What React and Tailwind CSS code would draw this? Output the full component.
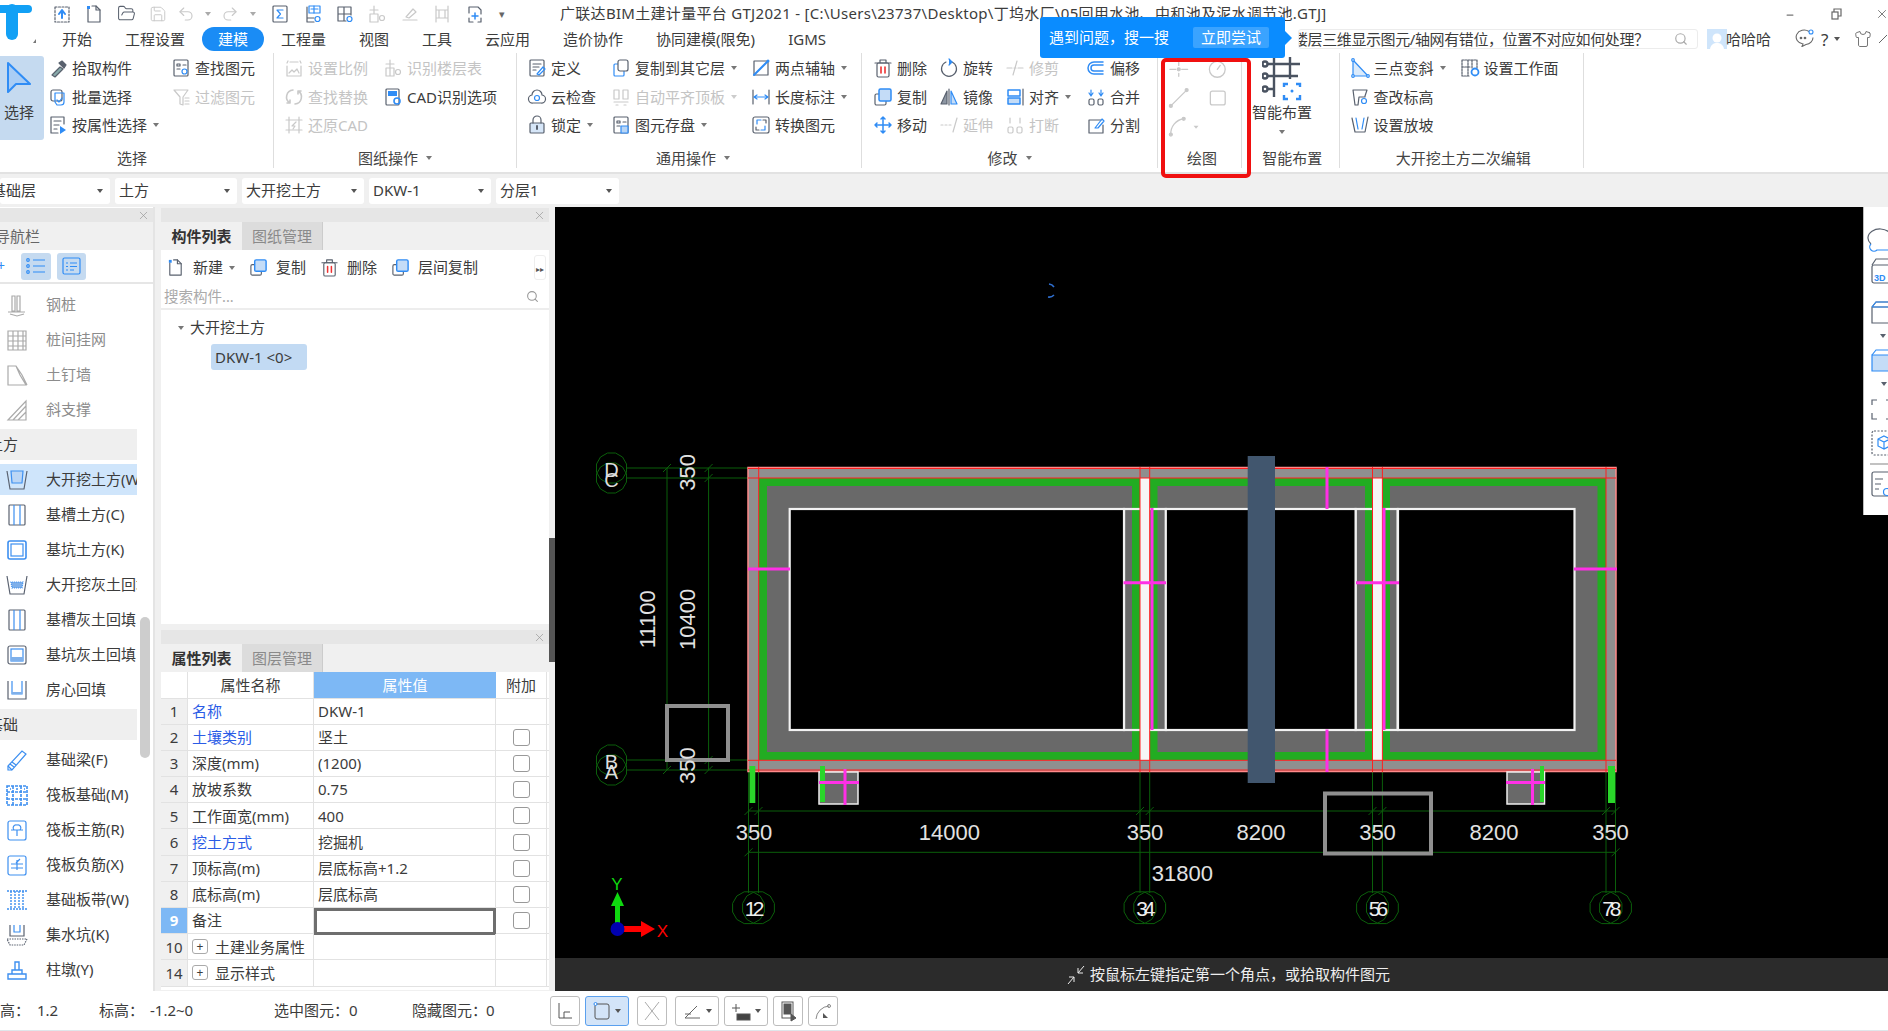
import React from 'react'
import { FolderOpen, Save, Undo2, Redo2, Search, X, Shirt, Minus } from 'lucide-react'

const D = '#59616e'
const B = '#2f8cf5'
const L = '#c4dcf7'
const G = '#c9c9c9'

function Svg({ children, s = 20 }) {
  return (
    <svg width={s} height={s} viewBox="0 0 20 20" fill="none" stroke={D} strokeWidth="1.2" strokeLinecap="round" strokeLinejoin="round" className="shrink-0">
      {children}
    </svg>
  )
}

const ic = {
  upload: <><rect x="3" y="3" width="14" height="15" strokeDasharray="2 1.5" /><path d="M10 14V7M7 10l3-4 3 4" stroke={B} strokeWidth="2" /></>,
  newdoc: <><path d="M4 5v13h12V6l-4-4H8" /><path d="M12 2v4h4" /><path d="M3 2h3v3H3z" fill={B} stroke="none" /></>,
  sigma: <><rect x="3" y="2" width="14" height="16" rx="1" /><path d="M13 6H7l3.5 4L7 14h6" stroke={B} /></>,
  sheetq: <><path d="M4 3v15h7M4 14h7" /><rect x="6" y="2" width="11" height="7" stroke={B} /><path d="M8 5h7M11 2v7" stroke={B} /><circle cx="14.5" cy="15" r="2.5" stroke={B} /></>,
  gridq: <><path d="M3 3h13v8M3 3v14h8M3 10h13M9 3v14" /><circle cx="14.5" cy="15" r="2.5" stroke={B} /></>,
  gridoff: <><path d="M7 2v8M3 6h8M3 10h8v8H3z" stroke={G} /><circle cx="15" cy="14" r="2.5" stroke={G} /></>,
  pen: <path d="M3 16h14M6 13l7-8 3 3-7 6z" stroke={G} />,
  dims: <path d="M4 2v16M16 2v16M4 6h12M4 14h12M7 6v8M13 6v8" stroke={G} />,
  cornerplus: <><path d="M5 9V3h9l3 3v4M9 18H5v-4M17 14v4h-3" /><path d="M11 9v6M8 12h6" stroke={B} strokeWidth="1.5" /></>,
  pick: <><path d="M4 17l8-8 3 2-8 8z" fill="#8aa" /><path d="M11 5l5 5 2-3-4-4z" fill={D} /></>,
  batch: <><rect x="3" y="3" width="11" height="11" rx="2" /><path d="M7 6h9v9a3 3 0 0 1-3 3H9l-2-3z" stroke={B} /><path d="M9 13l2 2 3-4" stroke={B} /></>,
  attr: <><path d="M16 9V2H3v16h7" /><path d="M6 6h7M6 10h5M6 14h3" /><path d="M12 11l6 4-6 4z" fill={B} stroke="none" /></>,
  find: <><rect x="3" y="2" width="14" height="16" rx="1" /><path d="M6 6h3v2H6zM12 7h3M6 11h3" /><circle cx="13.5" cy="13.5" r="2.5" stroke={B} /></>,
  filter: <path d="M3 3h14l-5 7v8l-3-1v-7zM14 11h4M14 14h4M14 17h4" stroke={G} />,
  scale: <><path d="M3 8v10h14V8M6 4h8M3 5l1-2M17 5l-1-2" stroke={G} /><path d="M5 15l3-3 2 2 3-3 2 4" stroke={G} /></>,
  floor: <><path d="M7 2v8M3 6h8M3 10h8v8H3zM7 10v8" stroke={G} /><circle cx="15" cy="14" r="2.5" stroke={G} /></>,
  swap: <path d="M9 3a7 7 0 0 0-3 13M11 17a7 7 0 0 0 3-13M6 13v3H3M14 7V4h3" stroke={G} strokeWidth="1.6" />,
  restore: <><path d="M2 5h16M2 15h16M5 2v16M15 2v16" stroke={G} /><path d="M12 7l-4 4h3l-2 3" stroke={G} /></>,
  cad: <><rect x="3" y="2" width="13" height="16" rx="1" /><rect x="5" y="4" width="9" height="5" fill={B} stroke="none" /><circle cx="14" cy="14" r="3" stroke={B} strokeWidth="1.6" /></>,
  define: <><rect x="3" y="2" width="14" height="16" rx="1" /><path d="M6 6h8M6 9h6M6 12h3" /><path d="M10 16l6-7 2 2-6 6z" stroke={B} /></>,
  cloud: <><path d="M6 16a4 4 0 0 1-1-8 5 5 0 0 1 10 0 4 4 0 0 1-1 8z" /><circle cx="10" cy="11" r="2.5" stroke={B} /></>,
  lock: <><rect x="3" y="8" width="14" height="10" rx="1" fill="#d6e6f8" /><path d="M6 8V5a4 4 0 0 1 8 0v3" /><path d="M10 11v3" stroke={D} strokeWidth="2" /></>,
  copyto: <><rect x="3" y="6" width="10" height="12" rx="1" stroke={B} /><rect x="7" y="2" width="10" height="11" rx="2" fill="#fff" /></>,
  autoalign: <path d="M3 3h5v9H3zM12 3h5v9h-5zM3 15h14M5 18h2M13 18h2" stroke={G} />,
  store: <><rect x="3" y="2" width="14" height="16" rx="1" /><path d="M6 6h3v2H6zM12 7h3M6 11h3" /><rect x="10" y="11" width="7" height="7" fill="#b8d5f5" stroke={B} /></>,
  axis: <><path d="M3 3h14v14H3z" /><path d="M3 17L17 3" stroke={B} strokeWidth="2" /><circle cx="17" cy="3" r="1.5" fill={B} stroke="none" /></>,
  length: <><path d="M2 3v14M18 3v14" /><path d="M3 10h14M6 8l-3 2 3 2M14 8l3 2-3 2" stroke={B} /></>,
  convert: <><rect x="2" y="2" width="16" height="16" rx="2" /><path d="M6 9V5h4M14 11v4h-4" stroke={B} /><path d="M12 5h3v3M5 12v3h3" /></>,
  del: <><rect x="4" y="5" width="12" height="14" rx="1.5" /><path d="M2 5h16M7 5V2h6v3" /><path d="M8 9v6M12 9v6" stroke="#e33" strokeWidth="1.6" /></>,
  rotate: <><path d="M7 4a7.5 7.5 0 1 0 6 0" /><path d="M10 1l3 3-3 3" stroke={B} fill={B} /></>,
  trim: <path d="M2 10h5M9 10h2M13 10h5M12 3L8 17" stroke={G} />,
  offset: <path d="M17 4H8a6 6 0 0 0 0 12h9M17 7H8a3 3 0 0 0 0 6h9" stroke={B} strokeWidth="1.5" />,
  copy: <><rect x="2" y="7" width="11" height="11" rx="1.5" /><rect x="6" y="2" width="12" height="12" rx="1.5" fill={L} stroke={B} strokeWidth="1.5" /></>,
  mirror: <><path d="M10 2v16" /><path d="M8 4L2 17h6z" fill="#8d96a3" /><path d="M12 4l6 13h-6z" fill={L} stroke={B} /></>,
  align: <><rect x="3" y="3" width="12" height="6" stroke={B} strokeWidth="1.5" /><rect x="3" y="11" width="12" height="6" fill={L} stroke={B} strokeWidth="1.5" /><path d="M18 2v16" /></>,
  merge: <><rect x="3" y="12" width="5" height="6" rx="1.5" /><rect x="12" y="12" width="5" height="6" rx="1.5" /><path d="M5 3v5M15 3v5M3 6l2 3 2-3M13 6l2 3 2-3" stroke={B} /></>,
  move: <path d="M10 2v16M2 10h16M8 4l2-2 2 2M8 16l2 2 2-2M4 8l-2 2 2 2M16 8l2 2-2 2" stroke={B} strokeWidth="1.5" />,
  extend: <path d="M2 10h2M6 10h2M10 10h2M18 3l-4 14" stroke={G} />,
  breakit: <><rect x="3" y="12" width="5" height="6" rx="1.5" stroke={G} /><rect x="12" y="12" width="5" height="6" rx="1.5" stroke={G} /><path d="M5 3v5M15 3v5" stroke={G} /></>,
  split: <><path d="M15 5H3v13h14v-8" /><path d="M9 13l7-9 2 2-6 7z" stroke={B} /></>,
  threept: <><path d="M3 2v16h15z" fill="#dcebfb" stroke={B} /><circle cx="3" cy="2" r="1.3" fill="#fff" stroke={B} /><circle cx="3" cy="18" r="1.3" fill="#fff" stroke={B} /><circle cx="18" cy="18" r="1.3" fill="#fff" stroke={B} /></>,
  workplane: <><path d="M2 2h15v8M2 2v16h8M2 9h8M8 2v16M12 2v8" strokeDasharray="2 1" /><circle cx="15" cy="14" r="3.5" stroke={B} strokeWidth="1.8" /></>,
  elev: <><path d="M3 3h14l-2 6v1H9l-1 8H5z" /><circle cx="14" cy="14" r="2.5" stroke={B} /></>,
  slope: <><path d="M2 3l3 14h10l3-15" /><path d="M6 3l2 11M14 3l-2 11" stroke={B} /></>,
}

const I = ({ n, s }) => <Svg s={s}>{ic[n]}</Svg>

function Caret({ c = '#777', cls = '' }) {
  return <span className={`inline-block w-0 h-0 border-x-[3px] border-x-transparent border-t-[4px] ${cls}`} style={{ borderTopColor: c }} />
}

function Item({ n, t, off, caret }) {
  return (
    <div className="flex items-center h-[28.5px] whitespace-nowrap">
      <I n={n} />
      {t && <span className={`ml-[4px] ${off ? 'text-[#c4c4c4]' : 'text-[#3c3c3c]'}`}>{t}</span>}
      {caret && <Caret c={off ? '#ccc' : '#777'} cls="ml-[6px]" />}
    </div>
  )
}

function Group({ w, label, caret, children }) {
  return (
    <div className="flex flex-col h-[115px] pt-[1px] border-r border-[#dedede] shrink-0" style={{ width: w }}>
      <div className="flex h-[85.5px]">{children}</div>
      <div className="mt-[8.5px] h-[20px] leading-[20px] flex items-center justify-center text-[#444]">
        {label}
        {caret && <Caret cls="ml-[8px]" />}
      </div>
    </div>
  )
}

function Col({ w, children }) {
  return <div className="flex flex-col shrink-0" style={{ width: w }}>{children}</div>
}

function Ribbon() {
  return (
    <div className="flex h-[123px] pt-[2px] bg-white text-[15px] border-b-2 border-[#e2e2e2] relative">
      <Group w={274} label={<span className="-ml-[9px]">选择</span>}>
        <div className="w-[44px] h-[84px] mt-[2px] bg-[#c5daf0] rounded-r-[3px] flex flex-col items-center shrink-0 text-[#3c3c3c]">
          <svg width="26" height="32" viewBox="0 0 26 32" className="mt-[5px] -ml-[7px]">
            <path d="M2 2L24 23L10 23L2 31Z" fill="#a9cdf5" stroke={B} strokeWidth="2" strokeLinejoin="round" />
          </svg>
          <span className="mt-[8px] -ml-[6px]">选择</span>
        </div>
        <Col w={127}>
          <div className="ml-[4px]">
            <Item n="pick" t="拾取构件" />
            <Item n="batch" t="批量选择" />
            <Item n="attr" t="按属性选择" caret />
          </div>
        </Col>
        <Col w={100}>
          <Item n="find" t="查找图元" />
          <Item n="filter" t="过滤图元" off />
        </Col>
      </Group>
      <Group w={243} label="图纸操作" caret>
        <Col w={109}>
          <div className="ml-[10px]">
            <Item n="scale" t="设置比例" off />
            <Item n="swap" t="查找替换" off />
            <Item n="restore" t="还原CAD" off />
          </div>
        </Col>
        <Col w={130}>
          <Item n="floor" t="识别楼层表" off />
          <Item n="cad" t="CAD识别选项" />
        </Col>
      </Group>
      <Group w={345} label={<span className="ml-[8px]">通用操作</span>} caret>
        <Col w={94}>
          <div className="ml-[10px]">
            <Item n="define" t="定义" />
            <Item n="cloud" t="云检查" />
            <Item n="lock" t="锁定" caret />
          </div>
        </Col>
        <Col w={140}>
          <Item n="copyto" t="复制到其它层" caret />
          <Item n="autoalign" t="自动平齐顶板" off caret />
          <Item n="store" t="图元存盘" caret />
        </Col>
        <Col w={105}>
          <Item n="axis" t="两点辅轴" caret />
          <Item n="length" t="长度标注" caret />
          <Item n="convert" t="转换图元" />
        </Col>
      </Group>
      <Group w={296} label="修改" caret>
        <Col w={77}>
          <div className="ml-[11px]">
            <Item n="del" t="删除" />
            <Item n="copy" t="复制" />
            <Item n="move" t="移动" />
          </div>
        </Col>
        <Col w={66}>
          <Item n="rotate" t="旋转" />
          <Item n="mirror" t="镜像" />
          <Item n="extend" t="延伸" off />
        </Col>
        <Col w={81}>
          <Item n="trim" t="修剪" off />
          <Item n="align" t="对齐" caret />
          <Item n="breakit" t="打断" off />
        </Col>
        <Col w={66}>
          <Item n="offset" t="偏移" />
          <Item n="merge" t="合并" />
          <Item n="split" t="分割" />
        </Col>
      </Group>
      <Group w={84} label={<span className="ml-[5px]">绘图</span>}>
        <svg width="84" height="85" viewBox="0 0 84 85" fill="none" stroke={G} strokeWidth="1.3" strokeLinecap="round" className="mt-[2px]">
          <path d="M12 13h6M24 13h6M21 6v3M21 17v3" />
          <circle cx="21" cy="13" r="1.5" fill={G} />
          <circle cx="60" cy="13" r="8" />
          <path d="M60 13l3-4" />
          <path d="M13 50l16-16" />
          <circle cx="13" cy="50" r="1.5" fill={G} />
          <circle cx="29" cy="34" r="1.5" fill={G} />
          <rect x="53" y="35" width="15" height="14" rx="2" />
          <path d="M13 79a15 15 0 0 1 13-16" />
          <circle cx="13" cy="79" r="1.5" fill={G} />
          <circle cx="26" cy="63" r="1.5" fill={G} />
          <path d="M36 70l5 0-2.5 3z" fill={G} stroke="none" />
        </svg>
      </Group>
      <Group w={97.5} label={<span className="ml-[4px]">智能布置</span>}>
        <div className="flex flex-col items-center w-[80px] mt-[3px]">
          <svg width="40" height="44" viewBox="0 0 40 44" fill="none" stroke="#4a5361" strokeWidth="2.4">
            <path d="M5 7H38M5 19H36M5 32H12M12 0V40M28 0V22" />
            <circle cx="3" cy="7" r="2.5" fill="#fff" />
            <circle cx="3" cy="19" r="2.5" fill="#fff" />
            <circle cx="3" cy="32" r="2.5" fill="#fff" />
            <path d="M22 30v-3h4M34 27h4v3M38 38v4h-4M26 42h-4v-4" stroke={B} />
            <circle cx="30" cy="34" r="1.5" fill={B} stroke="none" />
          </svg>
          <span className="leading-[18px] mt-[2px] text-[#3c3c3c] whitespace-nowrap">智能布置</span>
          <Caret cls="mt-[9px]" />
        </div>
      </Group>
      <Group w={244.5} label={<span className="ml-[4px]">大开挖土方二次编辑</span>}>
        <Col w={120}>
          <div className="ml-[10px]">
            <Item n="threept" t="三点变斜" caret />
            <Item n="elev" t="查改标高" />
            <Item n="slope" t="设置放坡" />
          </div>
        </Col>
        <Col w={110}>
          <Item n="workplane" t="设置工作面" />
        </Col>
      </Group>
      {/* 截图里手动圈出来的红框 */}
      <div className="absolute left-[1161px] top-[7px] w-[90px] h-[120px] border-[4px] border-[#f01010] rounded-[5px]" />
    </div>
  )
}

function TitleRow() {
  const quick = [
    [32, <I n="upload" />],
    [32, <I n="newdoc" />],
    [32, <FolderOpen size={19} color={D} strokeWidth={1.3} />],
    [32, <Save size={18} color={G} strokeWidth={1.3} />],
    [24, <Undo2 size={18} color={G} strokeWidth={1.5} />],
    [20, <Caret c="#aaa" />],
    [24, <Redo2 size={18} color={G} strokeWidth={1.5} />],
    [22, <Caret c="#aaa" />],
    [32, <I n="sigma" />],
    [33, <I n="sheetq" />],
    [32, <I n="gridq" />],
    [32, <I n="gridoff" />],
    [33, <I n="pen" />],
    [32, <I n="dims" />],
    [32, <I n="cornerplus" />],
    [24, <span className="text-[#666] text-[11px] leading-none">▾</span>],
  ]
  return (
    <div className="flex items-center h-[27px] pl-[46px] bg-white text-[15px] text-[#3c3c3c]">
      <div className="flex items-center w-[514px] shrink-0">
        {quick.map(([w, el], i) => (
          <span key={i} className="flex items-center justify-center shrink-0" style={{ width: w }}>{el}</span>
        ))}
      </div>
      <span className="whitespace-nowrap tracking-[0.3px]">广联达BIM土建计量平台 GTJ2021 - [C:\Users\23737\Desktop\丁坞水厂\05回用水池、中和池及泥水调节池.GTJ]</span>
      <div className="ml-auto flex items-center text-[#555]">
        <Minus size={10} strokeWidth={3} className="mr-[36px] mt-[3px]" color="#777" />
        <svg width="11" height="12" viewBox="0 0 11 12" fill="none" stroke="#666" strokeWidth="1.2" className="mr-[33px]">
          <rect x="1" y="4" width="6" height="7" />
          <path d="M3 4V1h7v7H7" />
        </svg>
        <X size={14} strokeWidth={1.3} color="#555" className="mr-[-1px]" />
      </div>
    </div>
  )
}

function TabRow() {
  const before = ['开始', '工程设置']
  const after = ['工程量', '视图', '工具', '云应用', '造价协作', '协同建模(限免)', 'IGMS']
  return (
    <div className="flex items-center h-[24px] bg-white text-[15px] text-[#3c3c3c]">
      <div className="flex items-center gap-[33px] w-[1298px] pl-[62px] shrink-0 whitespace-nowrap">
        {before.map((t) => <span key={t}>{t}</span>)}
        <span className="-mx-[16px] w-[62px] h-[24px] leading-[24px] text-center rounded-full bg-[#1a8cf5] text-white">建模</span>
        {after.map((t) => <span key={t}>{t}</span>)}
      </div>
      <div className="w-[400px] h-[20px] border border-[#ececec] rounded-[3px] flex items-center overflow-hidden shrink-0">
        <span className="whitespace-nowrap text-[15px] -ml-[6px] tracking-[-0.4px] mr-auto">{'楼层三维显示图元/轴网有错位\uFF0C位置不对应如何处理\uFF1F'}</span>
        <Search size={14} color="#aaa" className="mr-[9px] shrink-0" />
      </div>
      <div className="w-[20px] h-[20px] bg-[#cfe5fb] ml-[9px] flex items-end justify-center overflow-hidden shrink-0">
        <svg width="16" height="18" viewBox="0 0 16 18"><circle cx="8" cy="7" r="4.5" fill="#fff" /><path d="M1 18c1-5 4-6 7-6s6 1 7 6z" fill="#fff" /></svg>
      </div>
      <span className="-ml-[1px] w-[48px] whitespace-nowrap">哈哈哈</span>
      <svg width="20" height="18" viewBox="0 0 20 18" fill="none" stroke="#666" strokeWidth="1.1" className="ml-[21px] -mt-[3px] shrink-0">
        <path d="M14 2.5a8 7 0 1 0-6 12.5l-1 2.5 4-2a8 7 0 0 0 7-7" />
        <circle cx="6" cy="9" r=".8" fill="#666" />
        <circle cx="10" cy="9" r=".8" fill="#666" />
        <circle cx="16" cy="3" r="2" stroke={B} />
      </svg>
      <span className="ml-[6px] w-[12px] text-[17px] leading-none">?</span>
      <Caret c="#555" cls="ml-[1px] mr-[14px]" />
      <Shirt size={18} color="#666" strokeWidth={1.2} className="shrink-0" />
      <svg width="8" height="10" viewBox="0 0 8 10" stroke="#666" className="ml-[7px] shrink-0"><path d="M0 9L8 1" /></svg>
    </div>
  )
}

function Combo({ w, t, cls = '' }) {
  return (
    <div className="flex items-center justify-between h-[26px] bg-white rounded-[3px] pl-[4px] pr-[7px] shrink-0 overflow-hidden" style={{ width: w }}>
      <span className={`whitespace-nowrap ${cls}`}>{t}</span>
      <Caret c="#555" />
    </div>
  )
}

function ComboRow() {
  return (
    <div className="flex items-center gap-[5px] h-[33px] bg-[#f0f0f0] text-[15px] text-[#3c3c3c]">
      <Combo w={110} t="基础层" cls="-ml-[13px]" />
      <Combo w={122} t="土方" />
      <Combo w={122} t="大开挖土方" />
      <Combo w={122} t="DKW-1" />
      <Combo w={123} t="分层1" />
    </div>
  )
}

const N = '#5a6270'
const BB = '#3d8ff0'
const navIcons = {
  pile: <path d="M7 3h3v15H7zM12 3h3v15h-3zM3 19h17M5 21l7 2 7-2" stroke="#aaa" />,
  mesh: <path d="M3 3h18v19H3zM3 8h18M3 13h18M3 18h18M8 3v19M13 3v19M18 3v19" stroke="#aaa" />,
  nail: <path d="M3 3h8l4 9 6 10H3zM11 3l6 9 5 10" stroke="#aaa" />,
  brace: <path d="M3 22h18V3zM8 22L21 8M21 14l-8 8" stroke="#aaa" />,
  dakai: <><path d="M2 3l3 18h14l3-18" stroke={N} /><path d="M6 3l1 12h10l1-12z" fill="#bcd6f5" stroke={BB} /></>,
  jicao: <><rect x="4" y="2" width="16" height="20" rx="1" stroke={N} /><path d="M9 2v20M15 2v20" stroke={BB} /></>,
  jikeng: <><rect x="3" y="3" width="18" height="18" rx="2" stroke={BB} strokeWidth="1.6" /><rect x="6" y="6" width="12" height="12" stroke={BB} /></>,
  hui: <><path d="M2 3l3 18h14l3-18" stroke={N} /><path d="M6 9l1 6h10l1-6z" fill="#7fb0ea" stroke={BB} strokeDasharray="1 1" /></>,
  huicao: <><rect x="4" y="2" width="16" height="20" rx="1" stroke={N} /><path d="M9 2v20M15 2v20" stroke={BB} /></>,
  huikeng: <><rect x="3" y="3" width="18" height="18" rx="2" stroke={N} /><rect x="6" y="6" width="12" height="12" stroke={BB} /><path d="M6 14h12v4H6z" fill="#7fb0ea" /></>,
  fang: <><path d="M3 3v18h18V3" stroke={N} /><path d="M7 3v13h10V3" stroke={BB} /><path d="M7 14h10v2H7z" fill="#7fb0ea" /></>,
  liang: <><path d="M3 18L17 3l4 3L7 22H3z" stroke={BB} /><path d="M3 18l4 4M5 16l4 3M7 14l4 3" stroke={BB} /></>,
  fb: <path d="M2 3h20v19H2zM2 9h20M2 16h20M8 3v19M16 3v19M5 6h1M11 6h2M19 6h1" stroke={BB} strokeDasharray="3 1" strokeWidth="1.6" />,
  zhu: <><rect x="3" y="3" width="18" height="19" rx="2" stroke={BB} /><path d="M6 12h12M12 7a3 3 0 0 1 3 5M12 7a3 3 0 0 0-3 5M12 12v6" stroke={BB} /></>,
  fu: <><rect x="3" y="3" width="18" height="19" rx="2" stroke={BB} /><path d="M6 11h12M6 15h12M12 7v10M15 6l-4 4" stroke={BB} /></>,
  dai: <path d="M2 3h20M2 21h20M6 3v18M18 3v18M10 3v18M14 3v18" stroke={BB} strokeDasharray="2 1" strokeWidth="1.4" />,
  ji: <><path d="M5 2v11h14V2" stroke={N} /><path d="M2 16h20l-3 6H5z" stroke={N} strokeDasharray="1.5 1" /><path d="M9 2v7h6V2" stroke={BB} /></>,
  dun: <path d="M3 21h18v-5H3zM7 16v-4h10v4M10 12V4h4v8" stroke={BB} strokeWidth="1.4" />,
}

const navRows = [
  ['pile', '钢桩', 'off'], ['mesh', '桩间挂网', 'off'], ['nail', '土钉墙', 'off'], ['brace', '斜支撑', 'off'],
  ['', '土方', 'head'],
  ['dakai', '大开挖土方(W)', 'sel'], ['jicao', '基槽土方(C)'], ['jikeng', '基坑土方(K)'], ['hui', '大开挖灰土回填'],
  ['huicao', '基槽灰土回填'], ['huikeng', '基坑灰土回填'], ['fang', '房心回填'],
  ['', '基础', 'head'],
  ['liang', '基础梁(F)'], ['fb', '筏板基础(M)'], ['zhu', '筏板主筋(R)'], ['fu', '筏板负筋(X)'],
  ['dai', '基础板带(W)'], ['ji', '集水坑(K)'], ['dun', '柱墩(Y)'],
]

function PanelStrip() {
  return (
    <div className="h-[14px] bg-[#e6e6e6] flex items-center justify-end pr-[3px] shrink-0">
      <X size={13} color="#999" strokeWidth={1.3} />
    </div>
  )
}

function NavRow({ n, t, kind }) {
  const bg = kind === 'head' ? 'bg-[#efefef]' : kind === 'sel' ? 'bg-[#cfe5fb]' : ''
  return (
    <div className="h-[35px] flex items-center">
      <div className={`flex items-center h-[31px] w-[137px] overflow-hidden whitespace-nowrap ${bg}`}>
        {kind === 'head' ? (
          <span className="-ml-[12px] text-[#3c3c3c]">{t}</span>
        ) : (
          <>
            <svg width="24" height="24" viewBox="0 0 24 24" fill="none" strokeWidth="1.2" className="ml-[5px] shrink-0">{navIcons[n]}</svg>
            <span className={`ml-[17px] ${kind === 'off' ? 'text-[#8c8c8c]' : 'text-[#3c3c3c]'}`}>{t}</span>
          </>
        )}
      </div>
    </div>
  )
}

function LeftNav() {
  return (
    <div className="w-[155px] shrink-0 flex flex-col pt-[1px] bg-white border-r-2 border-[#e4e4e4] text-[15px] relative h-[784px] overflow-hidden">
      <PanelStrip />
      <div className="h-[28px] bg-[#f0f0f0] leading-[28px] text-[#666] -indent-[5px]">导航栏</div>
      <div className="h-[34px] flex items-center border-b-2 border-[#e6e6e6] shrink-0">
        <span className="text-[#2f8cf5] text-[14px] -ml-[3px] w-[24px] leading-none">+</span>
        <span className="w-[30px] h-[27px] rounded-[3px] bg-[#c5daf0] flex items-center justify-center">
          <svg width="20" height="16" viewBox="0 0 20 16" fill="none" stroke={B} strokeWidth="1.2"><path d="M7 2h12M7 8h12M7 14h12" /><circle cx="2" cy="2" r="1.3" /><circle cx="2" cy="8" r="1.3" /><circle cx="2" cy="14" r="1.3" /></svg>
        </span>
        <span className="ml-[6px] w-[29px] h-[27px] rounded-[3px] bg-[#c5daf0] flex items-center justify-center">
          <svg width="19" height="18" viewBox="0 0 19 18" fill="none" stroke={B} strokeWidth="1.2"><rect x="1" y="1" width="17" height="16" rx="1.5" /><path d="M4 6h2M8 6h7M4 9.5h2M8 9.5h7M4 13h2M8 13h4" /></svg>
        </span>
      </div>
      <div className="pt-[3px]">
        {navRows.map(([n, t, k]) => <NavRow key={t} n={n} t={t} kind={k} />)}
      </div>
      <div className="absolute left-[140px] top-[410px] w-[10px] h-[141px] rounded-full bg-[#cdcdcd]" />
    </div>
  )
}

function Tabs({ a, b }) {
  return (
    <div className="flex h-[28px] bg-[#f0f0f0] shrink-0">
      <div className="w-[81px] flex items-center justify-center font-semibold text-[#333]">{a}</div>
      <div className="w-[81px] flex items-center justify-center bg-[#dcdcdc] text-[#8a8a8a] border-r border-[#ccc]">{b}</div>
    </div>
  )
}

function ToolBtn({ children, t, cls }) {
  return (
    <div className={`flex items-center whitespace-nowrap ${cls}`}>
      {children}
      <span className="ml-[8px]">{t}</span>
    </div>
  )
}

function ComponentPanel() {
  return (
    <div className="h-[416px] flex flex-col bg-white shrink-0">
      <PanelStrip />
      <Tabs a="构件列表" b="图纸管理" />
      <div className="h-[35px] flex items-center pl-[5px] text-[#3c3c3c] shrink-0 relative">
        <ToolBtn t="新建"><I n="newdoc" s={19} /></ToolBtn>
        <Caret cls="ml-[6px]" />
        <ToolBtn t="复制" cls="ml-[14px]"><I n="copy" s={19} /></ToolBtn>
        <ToolBtn t="删除" cls="ml-[14px]"><I n="del" s={19} /></ToolBtn>
        <ToolBtn t="层间复制" cls="ml-[14px]"><I n="copy" s={19} /></ToolBtn>
        <span className="absolute right-[3px] top-[5px] w-[12px] h-[25px] border border-[#eee] rounded-[3px] text-[8px] leading-[25px] text-center text-[#555]">▸▸</span>
      </div>
      <div className="h-[25px] flex items-center justify-between pl-[3px] pr-[10px] border-b-2 border-[#ededed] text-[14.5px] text-[#aaa] shrink-0">
        <span>搜索构件...</span>
        <Search size={13} color="#999" />
      </div>
      <div className="flex items-center h-[33px] pl-[17px] mt-[1px] text-[#3c3c3c] shrink-0">
        <Caret cls="mr-[6px]" />
        <span>大开挖土方</span>
      </div>
      <div className="ml-[50px] w-[96px] h-[26px] leading-[26px] bg-[#c2daf3] rounded-[3px] pl-[4px] whitespace-nowrap text-[#3c3c3c] shrink-0">DKW-1 &lt;0&gt;</div>
    </div>
  )
}

const propRows = [
  ['1', '名称', 'DKW-1', { blue: true, nocheck: true }],
  ['2', '土壤类别', '坚土', { blue: true }],
  ['3', '深度(mm)', '(1200)'],
  ['4', '放坡系数', '0.75'],
  ['5', '工作面宽(mm)', '400'],
  ['6', '挖土方式', '挖掘机', { blue: true }],
  ['7', '顶标高(m)', '层底标高+1.2'],
  ['8', '底标高(m)', '层底标高'],
  ['9', '备注', '', { active: true }],
  ['10', '土建业务属性', '', { group: true, nocheck: true }],
  ['14', '显示样式', '', { group: true, nocheck: true }],
]

function PropRow({ num, name, value, o = {} }) {
  return (
    <div className="flex h-[26.2px] border-b border-[#e2e2e2] text-[#3c3c3c]">
      <div className={`w-[27px] flex items-center justify-center border-r border-[#e2e2e2] ${o.active ? 'bg-[#7db8f5] text-white font-bold' : 'bg-[#f0f0f0]'}`}>{num}</div>
      <div className={`w-[126px] flex items-center pl-[4px] border-r border-[#e2e2e2] whitespace-nowrap ${o.blue ? 'text-[#2b5ce6]' : ''}`}>
        {o.group && (
          <span className="w-[16px] h-[15px] mr-[7px] border border-[#aaa] rounded-[3px] text-[12px] leading-[13px] text-center">+</span>
        )}
        {name}
      </div>
      <div className={`w-[182px] flex items-center pl-[4px] whitespace-nowrap ${o.active ? 'border-[3px] border-[#6e6e6e] bg-white h-[27px]' : 'border-r border-[#e2e2e2]'}`}>{value}</div>
      <div className="w-[51px] flex items-center justify-center border-r border-[#e2e2e2]">
        {!o.nocheck && <span className="w-[17px] h-[17px] border border-[#999] rounded-[3px]" />}
      </div>
    </div>
  )
}

function PropPanel() {
  return (
    <div className="mt-[6px] h-[360px] flex flex-col bg-white shrink-0">
      <PanelStrip />
      <Tabs a="属性列表" b="图层管理" />
      <div className="flex h-[26.5px] border-b border-[#e2e2e2] text-[#3c3c3c] shrink-0">
        <div className="w-[27px] border-r border-[#e2e2e2]" />
        <div className="w-[126px] flex items-center justify-center border-r border-[#e2e2e2]">属性名称</div>
        <div className="w-[182px] flex items-center justify-center bg-[#7db8f5] text-white">属性值</div>
        <div className="w-[51px] flex items-center justify-center border-r border-[#e2e2e2]">附加</div>
      </div>
      {propRows.map(([num, name, value, o]) => <PropRow key={num} num={num} name={name} value={value} o={o} />)}
    </div>
  )
}

function gon(cx, cy, r) {
  const pts = []
  for (let i = 0; i < 12; i++) {
    const a = (Math.PI / 6) * i + Math.PI / 12
    pts.push(`${(cx + r * Math.cos(a)).toFixed(1)},${(cy + r * Math.sin(a)).toFixed(1)}`)
  }
  return pts.join(' ')
}

const DG = '#0b5f0b'
const MG = '#ff2fe6'
const gridX = [748.5, 758.5, 1140, 1149.7, 1372.5, 1382.4, 1606, 1615.5]
const axisLabels = ['1', '2', '3', '4', '5', '6', '7', '8']

function Tick({ x, y }) {
  return <path d={`M${x - 4} ${y + 4}L${x + 4} ${y - 4}`} stroke={DG} />
}

function Label({ x, y, t, rot }) {
  return (
    <text x={x} y={y} textAnchor="middle" fontSize="22" fill="#e2e2e2" fontFamily="Liberation Sans" transform={rot ? `rotate(-90 ${x} ${y})` : undefined}>
      {t}
    </text>
  )
}

function Drawing() {
  return (
    <svg className="block w-full flex-1" viewBox="555 207 1333 751" preserveAspectRatio="xMinYMin meet">
      <rect x="555" y="207" width="1333" height="751" fill="#000" />

      {/* dimension lines */}
      <g stroke={DG} fill="none">
        <path d="M626 468H748M626 478H748M626 760H748M626 770H748" />
        <path d="M667 468V770M708.6 468V770" />
        <path d="M748 811H1616M748 852.3H1616" />
        {gridX.map((x) => <path key={x} d={`M${x} 772V893`} />)}
      </g>
      {[[667, 468], [667, 770], [708.6, 468], [708.6, 478], [708.6, 760], [708.6, 770]].map(([x, y]) => <Tick key={`${x}-${y}`} x={x} y={y} />)}
      {gridX.map((x) => <Tick key={x} x={x} y={811} />)}
      <Tick x={748.5} y={852.3} />
      <Tick x={1615.5} y={852.3} />

      {/* slab */}
      <rect x="748" y="467" width="868" height="305" fill="#8f8f8f" />
      <rect x="759" y="478" width="381" height="282" fill="#22ac22" />
      <rect x="767" y="486" width="365" height="266" fill="#696969" />
      <rect x="1150" y="478" width="222.5" height="282" fill="#22ac22" />
      <rect x="1157.5" y="486" width="207.5" height="266" fill="#696969" />
      <rect x="1382.4" y="478" width="223.6" height="282" fill="#22ac22" />
      <rect x="1390" y="486" width="207.5" height="266" fill="#696969" />

      <g stroke="#f2f2f2" strokeWidth="2.2">
        <rect x="1124" y="509" width="42" height="221" fill="none" />
        <rect x="1355.6" y="509" width="42" height="221" fill="none" />
        <rect x="789.7" y="509" width="334.3" height="221" fill="#000" />
        <rect x="1165.8" y="509" width="189.8" height="221" fill="#000" />
        <rect x="1398" y="509" width="176.5" height="221" fill="#000" />
      </g>
      <rect x="1140" y="478" width="9.7" height="282" fill="#f6f6f6" />
      <rect x="1372.5" y="478" width="9.9" height="282" fill="#f6f6f6" />

      {/* red outlines */}
      <rect x="748" y="467.5" width="868" height="304" fill="none" stroke="#ff8a8a" strokeWidth="1.5" />
      <path d="M748 468.5H1616M748 478H1616M748 760.3H1616M748 770H1616M758.7 467V772M1140 467V772M1149.7 467V772M1372.5 467V772M1382.4 467V772M1606 467V772" stroke="#ff1f1f" fill="none" />

      {/* magenta */}
      <g stroke={MG} strokeWidth="3" fill="none">
        <path d="M748 569H790M1123.5 582.7H1166M1356 582.7H1399M1574 569H1617" />
        <path d="M1152 508V730M1384 508V730M1327 467V509M1327 729.5V772" />
      </g>

      {/* lower stubs */}
      <rect x="819" y="772" width="39" height="32" fill="#696969" stroke="#eee" strokeWidth="1.5" />
      <rect x="1507" y="772" width="37.5" height="32" fill="#696969" stroke="#eee" strokeWidth="1.5" />
      <rect x="820" y="766" width="5" height="36" fill="#2ad62a" />
      <rect x="1540" y="766" width="4" height="36" fill="#2ad62a" />
      <rect x="749.5" y="766" width="5.8" height="37" fill="#2ad62a" />
      <rect x="1608" y="766" width="7" height="37" fill="#2ad62a" />
      <path d="M819 782.5H859M845 769V805M1506 782.5H1545M1532.5 769V805" stroke={MG} strokeWidth="3" />

      <rect x="1247.7" y="456" width="27.3" height="327" fill="#41566e" />

      <rect x="667" y="706" width="61" height="54" fill="none" stroke="#8f8f8f" strokeWidth="4" />
      <rect x="1325" y="793.5" width="106" height="60" fill="none" stroke="#8f8f8f" strokeWidth="4" />

      {/* axis bubbles */}
      <g fill="none" stroke={DG}>
        {gridX.map((x) => <polygon key={x} points={gon(x, 907.7, 16.5)} />)}
        {[468, 478, 760, 770].map((y) => <polygon key={y} points={gon(611.5, y, 15.5)} />)}
      </g>
      {gridX.map((x, i) => (
        <text key={x} x={x + (i % 2 ? 0 : 2)} y="915.5" textAnchor="middle" fontSize="21" fill="#eee" fontFamily="Liberation Sans">{axisLabels[i]}</text>
      ))}
      {[['D', 470], ['C', 480], ['B', 762], ['A', 772]].map(([t, y]) => (
        <text key={t} x="611.5" y={y + 7} textAnchor="middle" fontSize="20" fill="#ddd" fontFamily="Liberation Sans">{t}</text>
      ))}

      <Label x={754} y={840} t="350" />
      <Label x={949.3} y={840} t="14000" />
      <Label x={1145} y={840} t="350" />
      <Label x={1261} y={840} t="8200" />
      <Label x={1377.5} y={840} t="350" />
      <Label x={1494} y={840} t="8200" />
      <Label x={1610.5} y={840} t="350" />
      <Label x={1182.3} y={881} t="31800" />
      <Label x={695.5} y={472.3} t="350" rot />
      <Label x={695.5} y={765.7} t="350" rot />
      <Label x={695.5} y={619.3} t="10400" rot />
      <Label x={655} y={619.3} t="11100" rot />

      {/* UCS */}
      <path d="M617.5 892L624 906H620V925H615V906H611Z" fill="#0fd80f" />
      <path d="M624 926H641V921L655 929L641 937V932H624Z" fill="#f00" />
      <circle cx="617.5" cy="929" r="7" fill="#0000b0" />
      <text x="617" y="890" textAnchor="middle" fontSize="17" fill="#0fd80f" fontFamily="Liberation Sans">Y</text>
      <text x="662.5" y="937" textAnchor="middle" fontSize="17" fill="#f00" fontFamily="Liberation Sans">X</text>

      {/* 光标转圈 */}
      <path d="M1049 284a7 7 0 0 1 5 3M1054 295a7 7 0 0 1-6 2" stroke="#2f6fd0" strokeWidth="1.6" fill="none" />
    </svg>
  )
}

function RightTools() {
  return (
    <div className="absolute right-0 top-0 w-[25px] h-[308px] bg-white border-l border-[#bbb]">
      <svg width="25" height="308" viewBox="0 0 25 308" fill="none" stroke={D} strokeWidth="1.2">
        <path d="M7 37a12 9 0 0 1 18-12" stroke={D} />
        <path d="M7 37a4 4 0 0 0 6 6h12" stroke={B} />
        <rect x="8" y="58" width="20" height="18" rx="2" />
        <path d="M8 58l4-6h16" />
        <text x="10" y="74" fontSize="9" fill={B} stroke="none" fontFamily="Liberation Sans" fontWeight="700">3D</text>
        <path d="M8 100h20v16H8zM8 100l4-5h16" />
        <path d="M8 100l4-5h16M8 100h20" stroke={B} />
        <path d="M16 127h6l-3 4z" fill={D} stroke="none" />
        <path d="M8 148h20v16H8z" fill={L} stroke={B} />
        <path d="M8 148l4-5h16" stroke={B} />
        <path d="M17 175h6l-3 4z" fill={D} stroke="none" />
        <path d="M8 198v-5h5M8 206v6h5M22 193h6M22 212h6" />
        <rect x="8" y="224" width="20" height="24" rx="2" strokeDasharray="2 1.5" />
        <path d="M20 229l6 3v7l-6 3-6-3v-7zM14 232l6 3 6-3M20 235v7" stroke={B} />
        <path d="M6 257h19" stroke="#999" />
        <rect x="8" y="265" width="20" height="24" rx="2" />
        <path d="M11 272h8M11 277h6M11 282h4" />
        <circle cx="23" cy="285" r="3.5" stroke={B} />
      </svg>
    </div>
  )
}

function Canvas() {
  return (
    <div className="relative flex-1 flex flex-col min-w-0 h-[784px]">
      <Drawing />
      <RightTools />
      <div className="h-[33px] bg-[#2b2b2b] flex items-center pl-[511px] text-[15px] text-[#eee] whitespace-nowrap shrink-0">
        <svg width="20" height="20" viewBox="0 0 20 20" fill="none" stroke="#eee" strokeWidth="1" className="mr-[4px] shrink-0">
          <path d="M18 1l-6 7M12 3v5h5M2 19l6-7M8 17v-5H3" />
        </svg>
        {'按鼠标左键指定第一个角点\uFF0C或拾取构件图元'}
      </div>
    </div>
  )
}

function BtnIcon({ w, active, caret, children }) {
  return (
    <div className={`flex items-center justify-center h-[30px] rounded-[3px] border shrink-0 ${active ? 'border-[#5aa0ee] bg-[#d3e4f8]' : 'border-[#bdbdbd] bg-white'}`} style={{ width: w }}>
      {children}
      {caret && <Caret c="#555" cls="ml-[4px]" />}
    </div>
  )
}

function StatusBar() {
  return (
    <div className="flex items-center h-[40px] bg-white text-[15px] text-[#3c3c3c] whitespace-nowrap overflow-hidden border-b border-[#dfe6ea]">
      <span className="w-[52px] -ml-[15px] shrink-0">{'层高\uFF1A'}</span>
      <span className="w-[62px] shrink-0">1.2</span>
      <span className="w-[51px] shrink-0">{'标高\uFF1A'}</span>
      <span className="w-[124px] shrink-0">-1.2~0</span>
      <span className="w-[75px] shrink-0">{'选中图元\uFF1A'}</span>
      <span className="w-[63px] shrink-0">0</span>
      <span className="w-[74px] shrink-0">{'隐藏图元\uFF1A'}</span>
      <span className="w-[64px] shrink-0">0</span>
      <div className="flex items-center gap-[5px]">
        <BtnIcon w={30}>
          <svg width="18" height="20" viewBox="0 0 18 20" fill="none" stroke="#555"><path d="M3 2v15h13M8 17v-6h6" /></svg>
        </BtnIcon>
        <BtnIcon w={44} active caret>
          <svg width="18" height="20" viewBox="0 0 18 20" fill="none" stroke="#555"><rect x="2" y="3" width="14" height="15" rx="2" /><circle cx="2.5" cy="3" r="1.5" stroke={B} fill="#fff" /></svg>
        </BtnIcon>
        <span className="ml-[3px]">
          <BtnIcon w={30}>
            <svg width="20" height="22" viewBox="0 0 20 22" fill="none" stroke="#aaa"><path d="M3 2l14 18M17 2L3 20" /></svg>
          </BtnIcon>
        </span>
        <span className="ml-[3px]">
          <BtnIcon w={44} caret>
            <svg width="20" height="22" viewBox="0 0 20 22" fill="none" stroke="#666"><path d="M3 18h15M3 18L15 6M3 14h6" /></svg>
          </BtnIcon>
        </span>
        <BtnIcon w={44} caret>
          <svg width="20" height="22" viewBox="0 0 20 22" fill="none" stroke="#555"><path d="M5 4v8M1 8h8" /><rect x="6" y="14" width="13" height="6" fill="#444" /></svg>
        </BtnIcon>
        <BtnIcon w={30}>
          <svg width="18" height="22" viewBox="0 0 18 22" fill="none" stroke="#555"><rect x="3" y="2" width="11" height="16" /><rect x="5" y="4" width="7" height="10" fill="#555" /><path d="M12 14l5 4-5 3z" fill="#555" /></svg>
        </BtnIcon>
        <BtnIcon w={30}>
          <svg width="20" height="22" viewBox="0 0 20 22" fill="none" stroke="#888"><path d="M3 19a14 14 0 0 1 13-13" /><circle cx="16" cy="6" r="1.5" /><path d="M10 13l5 5h-5z" fill="#555" stroke="none" /></svg>
        </BtnIcon>
      </div>
    </div>
  )
}

function Callout() {
  return (
    <div className="absolute left-[1040px] top-[17px] w-[245px] h-[41px] bg-[#0a8cff] rounded-[3px] flex items-center pl-[9px] text-white text-[15px]">
      <span className="whitespace-nowrap">{'遇到问题\uFF0C搜一搜'}</span>
      <span className="ml-[24px] w-[76px] h-[21px] leading-[21px] text-center bg-[#3aa3ff] rounded-[2px] whitespace-nowrap">立即尝试</span>
      <span className="absolute -right-[7px] top-[14px] w-0 h-0 border-y-[7px] border-y-transparent border-l-[7px] border-l-[#0a8cff]" />
    </div>
  )
}

export default function App() {
  return (
    <div className="relative w-[1888px] h-[1031px] overflow-hidden bg-[#f0f0f0] font-['Noto_Sans','Noto_Sans_CJK_SC',sans-serif]">
      <TitleRow />
      <TabRow />
      <Ribbon />
      <ComboRow />
      <div className="flex h-[784px]">
        <LeftNav />
        <div className="w-[6px] shrink-0 bg-[#f0f0f0]" />
        <div className="w-[388px] shrink-0 flex flex-col pt-[1px] text-[15px]">
          <ComponentPanel />
          <PropPanel />
        </div>
        <div className="w-[6px] shrink-0 bg-[#f0f0f0] flex items-start">
          <div className="w-[6px] h-[124px] mt-[331px] bg-[#555]" />
        </div>
        <Canvas />
      </div>
      <StatusBar />
      <svg width="36" height="44" viewBox="0 0 36 44" className="absolute left-0 top-0">
        <path d="M-2 9H28" stroke="#12a0f5" strokeWidth="8" strokeLinecap="round" />
        <path d="M12 10V34" stroke="#12a0f5" strokeWidth="12" strokeLinecap="round" />
        <path d="M33 43h3v-4z" fill="#777" />
      </svg>
      <Callout />
    </div>
  )
}
